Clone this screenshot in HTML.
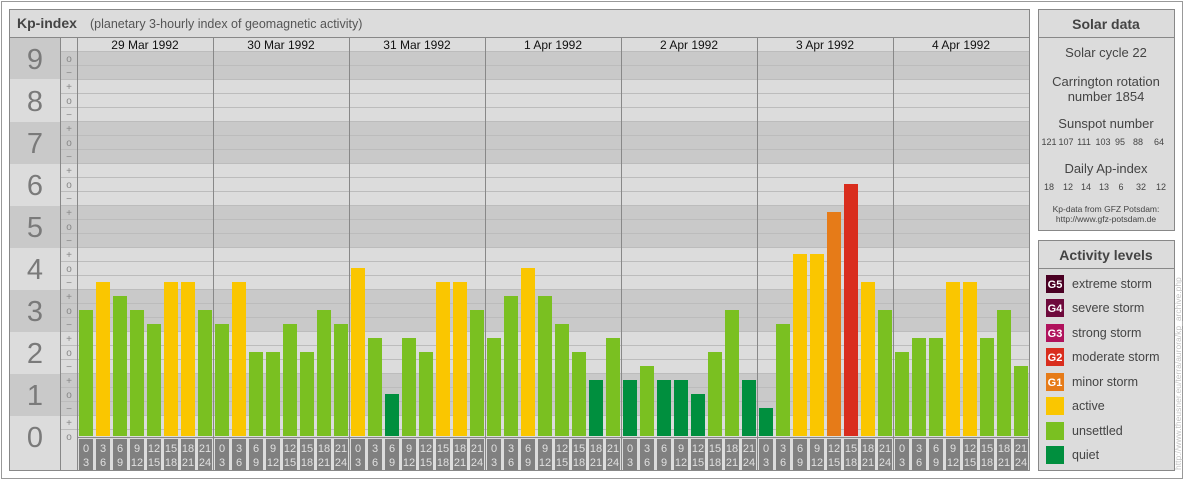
<!DOCTYPE html><html><head><meta charset="utf-8"><style>
body{margin:0;background:#fff;}
svg{display:block;font-family:"Liberation Sans",sans-serif;}
</style></head><body>
<svg width="1184" height="480" xmlns="http://www.w3.org/2000/svg">
<rect x="1.5" y="1.5" width="1181" height="477" fill="#fff" stroke="#999"/>
<rect x="9.5" y="9.5" width="1020" height="461" fill="#dcdcdc" stroke="#888"/>
<line x1="10" y1="37.5" x2="1029" y2="37.5" stroke="#888"/>
<text x="17" y="28" font-size="14" font-weight="bold" fill="#444">Kp-index</text>
<text x="90" y="28" font-size="12.5" fill="#555">(planetary 3-hourly index of geomagnetic activity)</text>
<g fill="#c9c9c9">
<rect x="10" y="38" width="50" height="41"/><rect x="60" y="51" width="969" height="28"/>
<rect x="10" y="122" width="1019" height="42"/>
<rect x="10" y="206" width="1019" height="42"/>
<rect x="10" y="290" width="1019" height="42"/>
<rect x="10" y="374" width="1019" height="42"/>
</g>
<g stroke="#bcbcbc" stroke-width="1">
<line x1="60" x2="1029" y1="65.5" y2="65.5"/><line x1="60" x2="1029" y1="79.5" y2="79.5"/><line x1="60" x2="1029" y1="93.5" y2="93.5"/><line x1="60" x2="1029" y1="107.5" y2="107.5"/><line x1="60" x2="1029" y1="121.5" y2="121.5"/><line x1="60" x2="1029" y1="135.5" y2="135.5"/><line x1="60" x2="1029" y1="149.5" y2="149.5"/><line x1="60" x2="1029" y1="163.5" y2="163.5"/><line x1="60" x2="1029" y1="177.5" y2="177.5"/><line x1="60" x2="1029" y1="191.5" y2="191.5"/><line x1="60" x2="1029" y1="205.5" y2="205.5"/><line x1="60" x2="1029" y1="219.5" y2="219.5"/><line x1="60" x2="1029" y1="233.5" y2="233.5"/><line x1="60" x2="1029" y1="247.5" y2="247.5"/><line x1="60" x2="1029" y1="261.5" y2="261.5"/><line x1="60" x2="1029" y1="275.5" y2="275.5"/><line x1="60" x2="1029" y1="289.5" y2="289.5"/><line x1="60" x2="1029" y1="303.5" y2="303.5"/><line x1="60" x2="1029" y1="317.5" y2="317.5"/><line x1="60" x2="1029" y1="331.5" y2="331.5"/><line x1="60" x2="1029" y1="345.5" y2="345.5"/><line x1="60" x2="1029" y1="359.5" y2="359.5"/><line x1="60" x2="1029" y1="373.5" y2="373.5"/><line x1="60" x2="1029" y1="387.5" y2="387.5"/><line x1="60" x2="1029" y1="401.5" y2="401.5"/><line x1="60" x2="1029" y1="415.5" y2="415.5"/><line x1="60" x2="1029" y1="429.5" y2="429.5"/>
<line x1="60" x2="1029" y1="51.5" y2="51.5"/>
</g>
<g font-size="29" fill="#7a7a7a" text-anchor="middle">
<text x="35" y="69">9</text><text x="35" y="111">8</text><text x="35" y="153">7</text><text x="35" y="195">6</text><text x="35" y="237">5</text><text x="35" y="279">4</text><text x="35" y="321">3</text><text x="35" y="363">2</text><text x="35" y="405">1</text><text x="35" y="447">0</text>
</g>
<g font-size="10" fill="#888" text-anchor="middle">
<text x="69" y="62">o</text><text x="69" y="76">−</text>
<text x="69" y="90">+</text><text x="69" y="104">o</text><text x="69" y="118">−</text>
<text x="69" y="132">+</text><text x="69" y="146">o</text><text x="69" y="160">−</text>
<text x="69" y="174">+</text><text x="69" y="188">o</text><text x="69" y="202">−</text>
<text x="69" y="216">+</text><text x="69" y="230">o</text><text x="69" y="244">−</text>
<text x="69" y="258">+</text><text x="69" y="272">o</text><text x="69" y="286">−</text>
<text x="69" y="300">+</text><text x="69" y="314">o</text><text x="69" y="328">−</text>
<text x="69" y="342">+</text><text x="69" y="356">o</text><text x="69" y="370">−</text>
<text x="69" y="384">+</text><text x="69" y="398">o</text><text x="69" y="412">−</text>
<text x="69" y="426">+</text><text x="69" y="440">o</text>
</g>
<g stroke="#888">
<line x1="60.5" x2="60.5" y1="38" y2="470"/><line x1="77.5" x2="77.5" y1="38" y2="470"/>
<line x1="213.5" x2="213.5" y1="38" y2="470"/><line x1="349.5" x2="349.5" y1="38" y2="470"/><line x1="485.5" x2="485.5" y1="38" y2="470"/><line x1="621.5" x2="621.5" y1="38" y2="470"/><line x1="757.5" x2="757.5" y1="38" y2="470"/><line x1="893.5" x2="893.5" y1="38" y2="470"/>
</g>
<g font-size="12" fill="#111" text-anchor="middle">
<text x="145" y="49">29 Mar 1992</text><text x="281" y="49">30 Mar 1992</text><text x="417" y="49">31 Mar 1992</text><text x="553" y="49">1 Apr 1992</text><text x="689" y="49">2 Apr 1992</text><text x="825" y="49">3 Apr 1992</text><text x="961" y="49">4 Apr 1992</text>
</g>
<g>
<rect x="79" y="310" width="14" height="126" fill="#7ac021"/><rect x="96" y="282" width="14" height="154" fill="#fac600"/><rect x="113" y="296" width="14" height="140" fill="#7ac021"/><rect x="130" y="310" width="14" height="126" fill="#7ac021"/><rect x="147" y="324" width="14" height="112" fill="#7ac021"/><rect x="164" y="282" width="14" height="154" fill="#fac600"/><rect x="181" y="282" width="14" height="154" fill="#fac600"/><rect x="198" y="310" width="14" height="126" fill="#7ac021"/>
<rect x="215" y="324" width="14" height="112" fill="#7ac021"/><rect x="232" y="282" width="14" height="154" fill="#fac600"/><rect x="249" y="352" width="14" height="84" fill="#7ac021"/><rect x="266" y="352" width="14" height="84" fill="#7ac021"/><rect x="283" y="324" width="14" height="112" fill="#7ac021"/><rect x="300" y="352" width="14" height="84" fill="#7ac021"/><rect x="317" y="310" width="14" height="126" fill="#7ac021"/><rect x="334" y="324" width="14" height="112" fill="#7ac021"/>
<rect x="351" y="268" width="14" height="168" fill="#fac600"/><rect x="368" y="338" width="14" height="98" fill="#7ac021"/><rect x="385" y="394" width="14" height="42" fill="#008f3e"/><rect x="402" y="338" width="14" height="98" fill="#7ac021"/><rect x="419" y="352" width="14" height="84" fill="#7ac021"/><rect x="436" y="282" width="14" height="154" fill="#fac600"/><rect x="453" y="282" width="14" height="154" fill="#fac600"/><rect x="470" y="310" width="14" height="126" fill="#7ac021"/>
<rect x="487" y="338" width="14" height="98" fill="#7ac021"/><rect x="504" y="296" width="14" height="140" fill="#7ac021"/><rect x="521" y="268" width="14" height="168" fill="#fac600"/><rect x="538" y="296" width="14" height="140" fill="#7ac021"/><rect x="555" y="324" width="14" height="112" fill="#7ac021"/><rect x="572" y="352" width="14" height="84" fill="#7ac021"/><rect x="589" y="380" width="14" height="56" fill="#008f3e"/><rect x="606" y="338" width="14" height="98" fill="#7ac021"/>
<rect x="623" y="380" width="14" height="56" fill="#008f3e"/><rect x="640" y="366" width="14" height="70" fill="#7ac021"/><rect x="657" y="380" width="14" height="56" fill="#008f3e"/><rect x="674" y="380" width="14" height="56" fill="#008f3e"/><rect x="691" y="394" width="14" height="42" fill="#008f3e"/><rect x="708" y="352" width="14" height="84" fill="#7ac021"/><rect x="725" y="310" width="14" height="126" fill="#7ac021"/><rect x="742" y="380" width="14" height="56" fill="#008f3e"/>
<rect x="759" y="408" width="14" height="28" fill="#008f3e"/><rect x="776" y="324" width="14" height="112" fill="#7ac021"/><rect x="793" y="254" width="14" height="182" fill="#fac600"/><rect x="810" y="254" width="14" height="182" fill="#fac600"/><rect x="827" y="212" width="14" height="224" fill="#e67b18"/><rect x="844" y="184" width="14" height="252" fill="#d92d1d"/><rect x="861" y="282" width="14" height="154" fill="#fac600"/><rect x="878" y="310" width="14" height="126" fill="#7ac021"/>
<rect x="895" y="352" width="14" height="84" fill="#7ac021"/><rect x="912" y="338" width="14" height="98" fill="#7ac021"/><rect x="929" y="338" width="14" height="98" fill="#7ac021"/><rect x="946" y="282" width="14" height="154" fill="#fac600"/><rect x="963" y="282" width="14" height="154" fill="#fac600"/><rect x="980" y="338" width="14" height="98" fill="#7ac021"/><rect x="997" y="310" width="14" height="126" fill="#7ac021"/><rect x="1014" y="366" width="14" height="70" fill="#7ac021"/>
</g>
<rect x="78" y="437" width="951" height="33" fill="#dcdcdc"/>
<line x1="78" x2="1029" y1="437.5" y2="437.5" stroke="#888"/>
<g stroke="#888"><line x1="213.5" x2="213.5" y1="437" y2="470"/><line x1="349.5" x2="349.5" y1="437" y2="470"/><line x1="485.5" x2="485.5" y1="437" y2="470"/><line x1="621.5" x2="621.5" y1="437" y2="470"/><line x1="757.5" x2="757.5" y1="437" y2="470"/><line x1="893.5" x2="893.5" y1="437" y2="470"/></g>
<defs>
<g id="hl">
<rect x="79" y="439" width="14" height="31" fill="#808080"/><rect x="96" y="439" width="14" height="31" fill="#808080"/><rect x="113" y="439" width="14" height="31" fill="#808080"/><rect x="130" y="439" width="14" height="31" fill="#808080"/><rect x="147" y="439" width="14" height="31" fill="#808080"/><rect x="164" y="439" width="14" height="31" fill="#808080"/><rect x="181" y="439" width="14" height="31" fill="#808080"/><rect x="198" y="439" width="14" height="31" fill="#808080"/>
<g font-size="11" fill="#e0e0e0" text-anchor="middle">
<text x="86" y="452">0</text><text x="86" y="466">3</text>
<text x="103" y="452">3</text><text x="103" y="466">6</text>
<text x="120" y="452">6</text><text x="120" y="466">9</text>
<text x="137" y="452">9</text><text x="137" y="466">12</text>
<text x="154" y="452">12</text><text x="154" y="466">15</text>
<text x="171" y="452">15</text><text x="171" y="466">18</text>
<text x="188" y="452">18</text><text x="188" y="466">21</text>
<text x="205" y="452">21</text><text x="205" y="466">24</text>
</g></g>
</defs>
<use href="#hl"/><use href="#hl" x="136"/><use href="#hl" x="272"/><use href="#hl" x="408"/><use href="#hl" x="544"/><use href="#hl" x="680"/><use href="#hl" x="816"/>
<rect x="9.5" y="9.5" width="1020" height="461" fill="none" stroke="#888"/>

<rect x="1038.5" y="9.5" width="136" height="221" fill="#dcdcdc" stroke="#888"/>
<line x1="1039" x2="1174" y1="37.5" y2="37.5" stroke="#888"/>
<g text-anchor="middle" fill="#444">
<text x="1106" y="29" font-size="14" font-weight="bold">Solar data</text>
<text x="1106" y="57" font-size="13">Solar cycle 22</text>
<text x="1106" y="86" font-size="13">Carrington rotation</text>
<text x="1106" y="101" font-size="13">number 1854</text>
<text x="1106" y="128" font-size="13">Sunspot number</text>
<text x="1106" y="173" font-size="13">Daily Ap-index</text>
<text x="1106" y="212" font-size="8.5">Kp-data from GFZ Potsdam:</text>
<text x="1106" y="222" font-size="8.5">http://www.gfz-potsdam.de</text>
</g>
<g font-size="9" fill="#444" text-anchor="middle">
<text x="1049" y="145">121</text><text x="1066" y="145">107</text><text x="1084" y="145">111</text><text x="1103" y="145">103</text><text x="1120" y="145">95</text><text x="1138" y="145">88</text><text x="1159" y="145">64</text>
<text x="1049" y="190">18</text><text x="1068" y="190">12</text><text x="1086" y="190">14</text><text x="1104" y="190">13</text><text x="1121" y="190">6</text><text x="1141" y="190">32</text><text x="1161" y="190">12</text>
</g>

<rect x="1038.5" y="240.5" width="136" height="230" fill="#dcdcdc" stroke="#888"/>
<line x1="1039" x2="1174" y1="268.5" y2="268.5" stroke="#888"/>
<text x="1106" y="260" font-size="14" font-weight="bold" fill="#444" text-anchor="middle">Activity levels</text>
<rect x="1046" y="275" width="18" height="18" fill="#4a0023"/>
<rect x="1046" y="299" width="18" height="18" fill="#6e0a3c"/>
<rect x="1046" y="324" width="18" height="18" fill="#b0125c"/>
<rect x="1046" y="348" width="18" height="18" fill="#d92d1d"/>
<rect x="1046" y="373" width="18" height="18" fill="#e67b18"/>
<rect x="1046" y="397" width="18" height="18" fill="#fac600"/>
<rect x="1046" y="422" width="18" height="18" fill="#7ac021"/>
<rect x="1046" y="446" width="18" height="18" fill="#008f3e"/>
<g font-size="11" font-weight="bold" fill="#fff" text-anchor="middle">
<text x="1055" y="288">G5</text><text x="1055" y="312">G4</text><text x="1055" y="337">G3</text><text x="1055" y="361">G2</text><text x="1055" y="386">G1</text>
</g>
<g font-size="12.5" fill="#444">
<text x="1072" y="288">extreme storm</text><text x="1072" y="312">severe storm</text><text x="1072" y="337">strong storm</text><text x="1072" y="361">moderate storm</text><text x="1072" y="386">minor storm</text><text x="1072" y="410">active</text><text x="1072" y="435">unsettled</text><text x="1072" y="459">quiet</text>
</g>
<text transform="translate(1181,470) rotate(-90)" font-size="8.5" fill="#c4c4c4">http://www.theusner.eu/terra/aurora/kp_archive.php</text>
</svg>
</body></html>
